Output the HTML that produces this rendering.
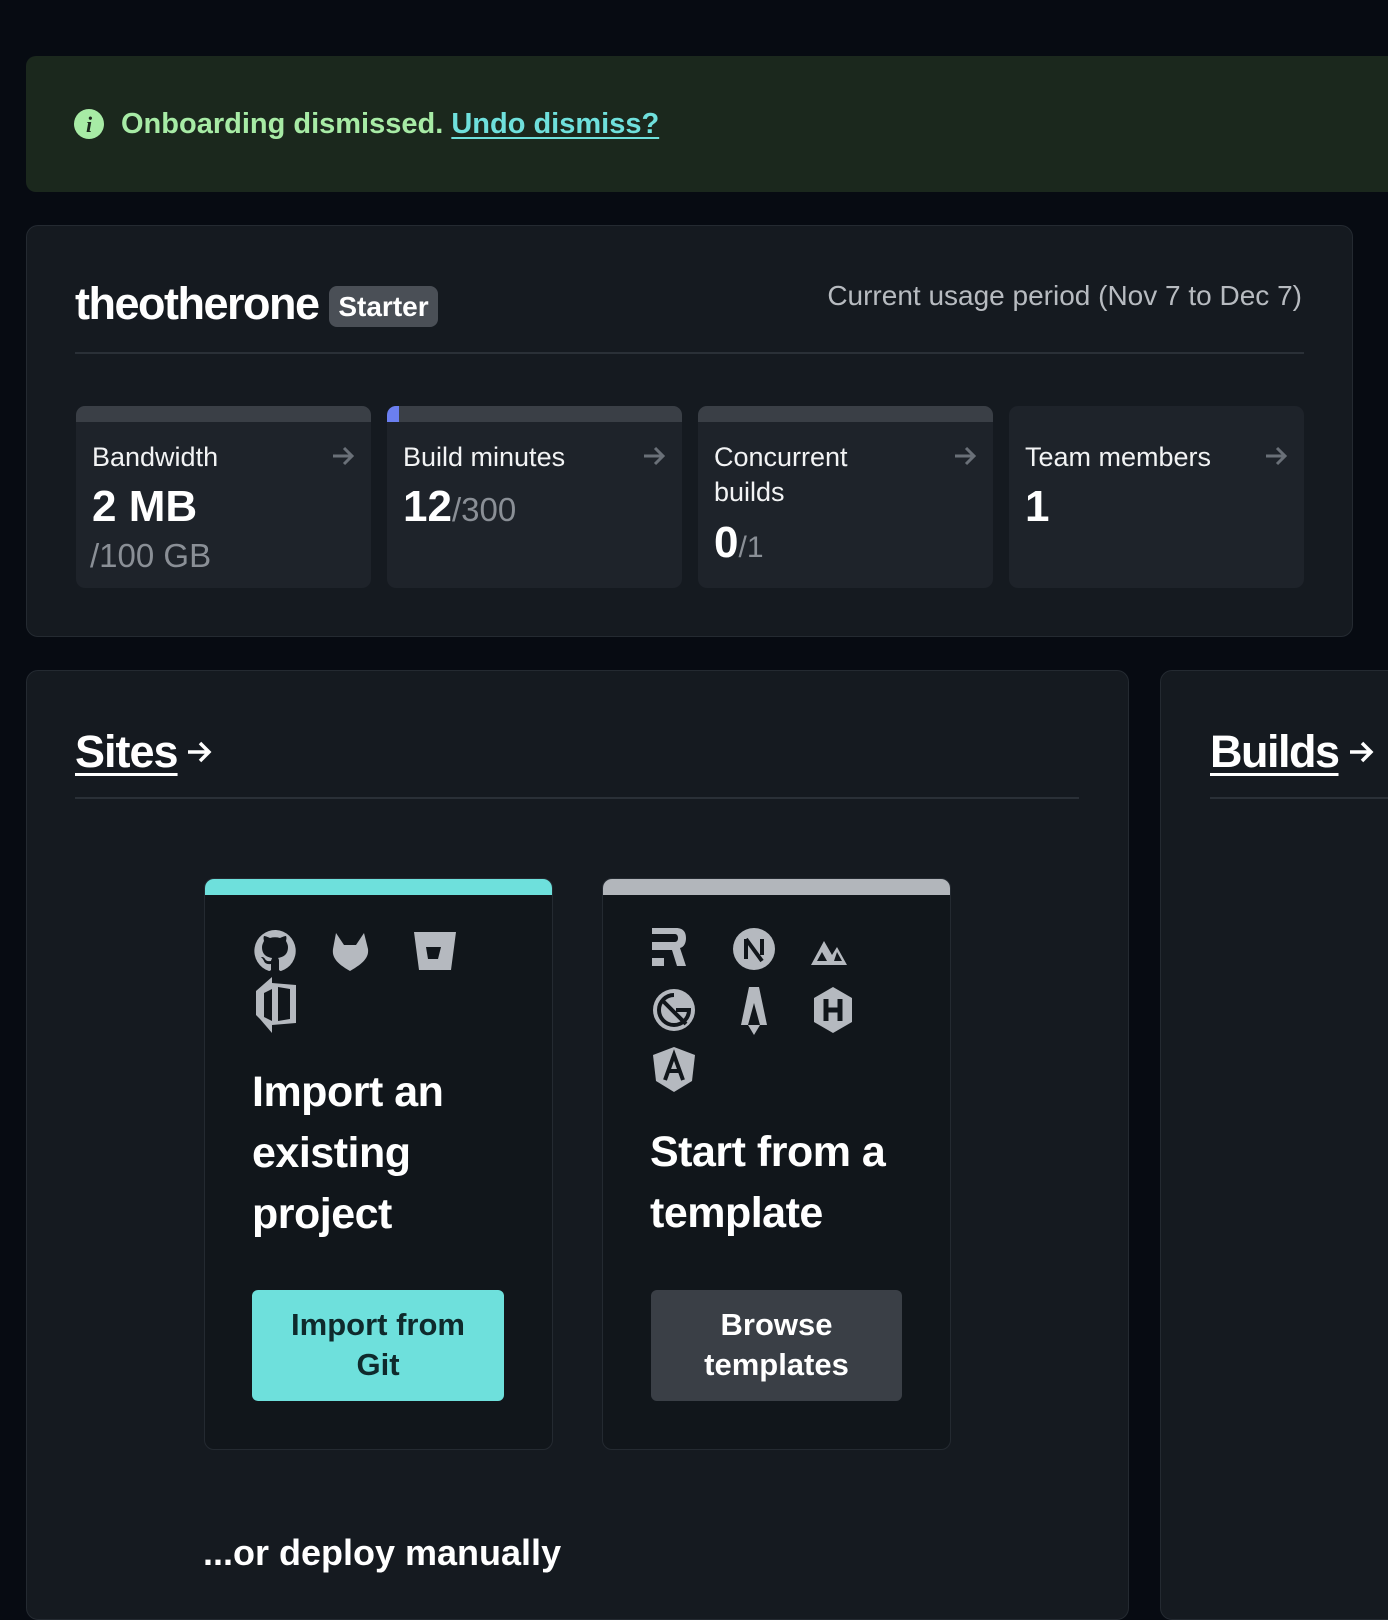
<!DOCTYPE html>
<html><head><meta charset="utf-8"><style>
*{box-sizing:border-box;margin:0;padding:0}
body{width:1388px;height:1578px;overflow:hidden;background:#070b12;font-family:"Liberation Sans",sans-serif;color:#fff;position:relative}
.abs{position:absolute}
.banner{left:26px;top:56px;width:1380px;height:136px;background:#1b281d;border-radius:10px}
.card{background:#151a20;border:1px solid #242a31;border-radius:12px}
.tile{top:406px;width:295px;height:182px;background:#1e232a;border-radius:9px;overflow:hidden}
.tile .bar{height:16px;background:#3a3f46}
.tile .lbl{position:absolute;left:16px;top:34px;font-size:27px;line-height:35px;color:#f2f3f4}
.tile .arr{position:absolute;right:16px;top:40px}
.big{font-size:44px;font-weight:bold}
.sm{color:#8a8f96;font-size:33px;font-weight:normal}
.sub{top:878px;width:349px;height:572px;background:#11161b;border:1px solid #242a31;border-radius:10px;overflow:hidden}
.sub .bar{height:16px}
.h{font-size:43px;font-weight:bold;line-height:61px;letter-spacing:-0.5px}
.btn{border-radius:6px;font-size:31px;font-weight:bold;text-align:center;line-height:40px;padding-top:15px}
.ic{fill:#b5b9bf}
</style></head><body>
<div class="abs banner"></div>
<svg class="abs" style="left:73px;top:108px" width="32" height="32" viewBox="0 0 32 32"><circle cx="16" cy="16" r="15" fill="#a7eba5"/><text x="16" y="24" font-family="Liberation Serif" font-style="italic" font-weight="bold" font-size="22" text-anchor="middle" fill="#1b281d">i</text></svg>
<div class="abs" style="left:121px;top:106px;font-size:29px;font-weight:bold;color:#a7eba5;line-height:36px">Onboarding dismissed. <span style="color:#6fe0dc;text-decoration:underline;text-underline-offset:4px">Undo dismiss?</span></div>

<div class="abs card" style="left:26px;top:225px;width:1327px;height:412px"></div>
<div class="abs" style="left:75px;top:278px;font-size:45px;font-weight:bold;letter-spacing:-1.5px">theotherone</div>
<div class="abs" style="left:329px;top:286px;width:109px;height:41px;background:#4a4f56;border-radius:8px;font-size:28px;font-weight:bold;text-align:center;line-height:41px">Starter</div>
<div class="abs" style="right:86px;top:280px;font-size:28px;color:#b7bbc0">Current usage period (Nov 7 to Dec 7)</div>
<div class="abs" style="left:75px;top:352px;width:1229px;height:2px;background:#2a3037"></div>

<div class="abs tile" style="left:76px"><div class="bar"></div><div class="lbl">Bandwidth</div><svg class="arr" width="24" height="20" viewBox="0 0 24 20"><path d="M2 10h19M13 2l8 8-8 8" stroke="#6a7078" stroke-width="3" fill="none"/></svg>
<div class="abs big" style="left:16px;top:76px">2 MB</div><div class="abs sm" style="left:14px;top:131px">/100 GB</div></div>
<div class="abs tile" style="left:387px"><div class="bar"><div style="width:12px;height:16px;background:#6b7ff0;border-radius:8px 0 0 0"></div></div><div class="lbl">Build minutes</div><svg class="arr" width="24" height="20" viewBox="0 0 24 20"><path d="M2 10h19M13 2l8 8-8 8" stroke="#6a7078" stroke-width="3" fill="none"/></svg>
<div class="abs big" style="left:16px;top:76px">12<span class="sm">/300</span></div></div>
<div class="abs tile" style="left:698px"><div class="bar"></div><div class="lbl">Concurrent<br>builds</div><svg class="arr" width="24" height="20" viewBox="0 0 24 20"><path d="M2 10h19M13 2l8 8-8 8" stroke="#6a7078" stroke-width="3" fill="none"/></svg>
<div class="abs big" style="left:16px;top:112px">0<span class="sm" style="font-size:30px">/1</span></div></div>
<div class="abs tile" style="left:1009px"><div class="lbl">Team members</div><svg class="arr" width="24" height="20" viewBox="0 0 24 20"><path d="M2 10h19M13 2l8 8-8 8" stroke="#6a7078" stroke-width="3" fill="none"/></svg>
<div class="abs big" style="left:16px;top:76px">1</div></div>

<div class="abs card" style="left:26px;top:670px;width:1103px;height:950px"></div>
<div class="abs card" style="left:1160px;top:670px;width:260px;height:950px"></div>
<div class="abs" style="left:75px;top:726px;font-size:45px;font-weight:bold;letter-spacing:-1px"><span style="text-decoration:underline;text-decoration-thickness:3px;text-underline-offset:6px">Sites</span></div>
<svg class="abs" style="left:186px;top:740px" width="26" height="24" viewBox="0 0 26 24"><path d="M2 12h21M14 3l9 9-9 9" stroke="#fff" stroke-width="3.5" fill="none"/></svg>
<div class="abs" style="left:75px;top:797px;width:1004px;height:2px;background:#2a3037"></div>
<div class="abs" style="left:1210px;top:726px;font-size:45px;font-weight:bold;letter-spacing:-1.5px;white-space:nowrap"><span style="text-decoration:underline;text-decoration-thickness:3px;text-underline-offset:6px">Builds</span></div>
<svg class="abs" style="left:1348px;top:740px" width="26" height="24" viewBox="0 0 26 24"><path d="M2 12h21M14 3l9 9-9 9" stroke="#fff" stroke-width="3.5" fill="none"/></svg>
<div class="abs" style="left:1210px;top:797px;width:200px;height:2px;background:#2a3037"></div>

<div class="abs sub" style="left:204px"><div class="bar" style="background:#6ee0dc"></div></div>
<div class="abs sub" style="left:602px"><div class="bar" style="background:#b2b6bb"></div></div>

<svg class="abs" style="left:250px;top:925px" width="220" height="110" viewBox="0 0 220 110">
<g class="ic">
<path d="M26 5a21 21 0 0 0-7 41c1 0 2-1 2-1v-6c-6 1-7-3-7-3-1-2-2-3-2-3-2-1 0-1 0-1 2 0 3 2 3 2 2 3 5 2 6 2 0-1 1-2 1-3-5-1-10-3-10-11 0-2 1-4 2-6 0-1-1-3 0-5 0 0 2 0 6 2a18 18 0 0 1 10 0c4-2 6-2 6-2 1 2 0 4 0 5 1 2 2 4 2 6 0 8-5 10-10 11 1 1 1 2 1 4v8s1 1 2 1A21 21 0 0 0 26 5z"/>
<path d="M86 8l8 12h12l8-12 4 16c1 8-4 14-18 22C86 38 82 32 83 24z"/>
<path d="M164 7h42l-5 38h-32zM176 22l2 12h10l3-12z" fill-rule="evenodd"/>
<path d="M22 52l-16 14v24l4 4 12 14 0-8 24-2V60L22 58z M14 68l8-4v32l-8-4z M28 62l12 2v30l-12 2z" fill-rule="evenodd"/>
</g></svg>

<svg class="abs" style="left:648px;top:925px" width="220" height="170" viewBox="0 0 220 170">
<g class="ic">
<path d="M4 3h24c8 0 10 5 10 10s-2 9-6 10l6 18h-9l-5-16H4v-8h23c2 0 3-2 3-4s-1-4-3-4H4z"/><rect x="4" y="33" width="12" height="8"/>
<circle cx="106" cy="24" r="21"/><path d="M98 14v20M98 14l16 22M114 14v16" stroke="#11161b" stroke-width="4" fill="none"/>
<path d="M163 40l13-24 8 14 5-8 10 18z M169 36h10l-5-9z M186 36h8l-5-9z" fill-rule="evenodd"/>
<circle cx="26" cy="85" r="21"/><path d="M26 70a15 15 0 1 0 15 15H28M14 75l24 24" stroke="#11161b" stroke-width="4" fill="none"/>
<path d="M101 62h10l8 38h-7l-6-22-6 22h-7zM100 100h12l-6 10z"/>
<path d="M185 62l19 11v24l-19 11-19-11V73z"/><path d="M178 74v22M192 74v22M178 85h14" stroke="#11161b" stroke-width="5" fill="none"/>
<path d="M26 122l21 8-3 26-18 11-18-11-3-26z"/><path d="M17 155l9-25 9 25M20 146h12" stroke="#11161b" stroke-width="4" fill="none"/>
</g></svg>

<div class="abs h" style="left:252px;top:1062px">Import an<br>existing<br>project</div>
<div class="abs h" style="left:650px;top:1122px">Start from a<br>template</div>
<div class="abs btn" style="left:252px;top:1290px;width:252px;height:111px;background:#6ee0dc;color:#0f2a2c">Import from<br>Git</div>
<div class="abs btn" style="left:651px;top:1290px;width:251px;height:111px;background:#3a3f46;color:#fff">Browse<br>templates</div>

<div class="abs" style="left:203px;top:1532px;font-size:36px;font-weight:bold">...or deploy manually</div>
</body></html>
